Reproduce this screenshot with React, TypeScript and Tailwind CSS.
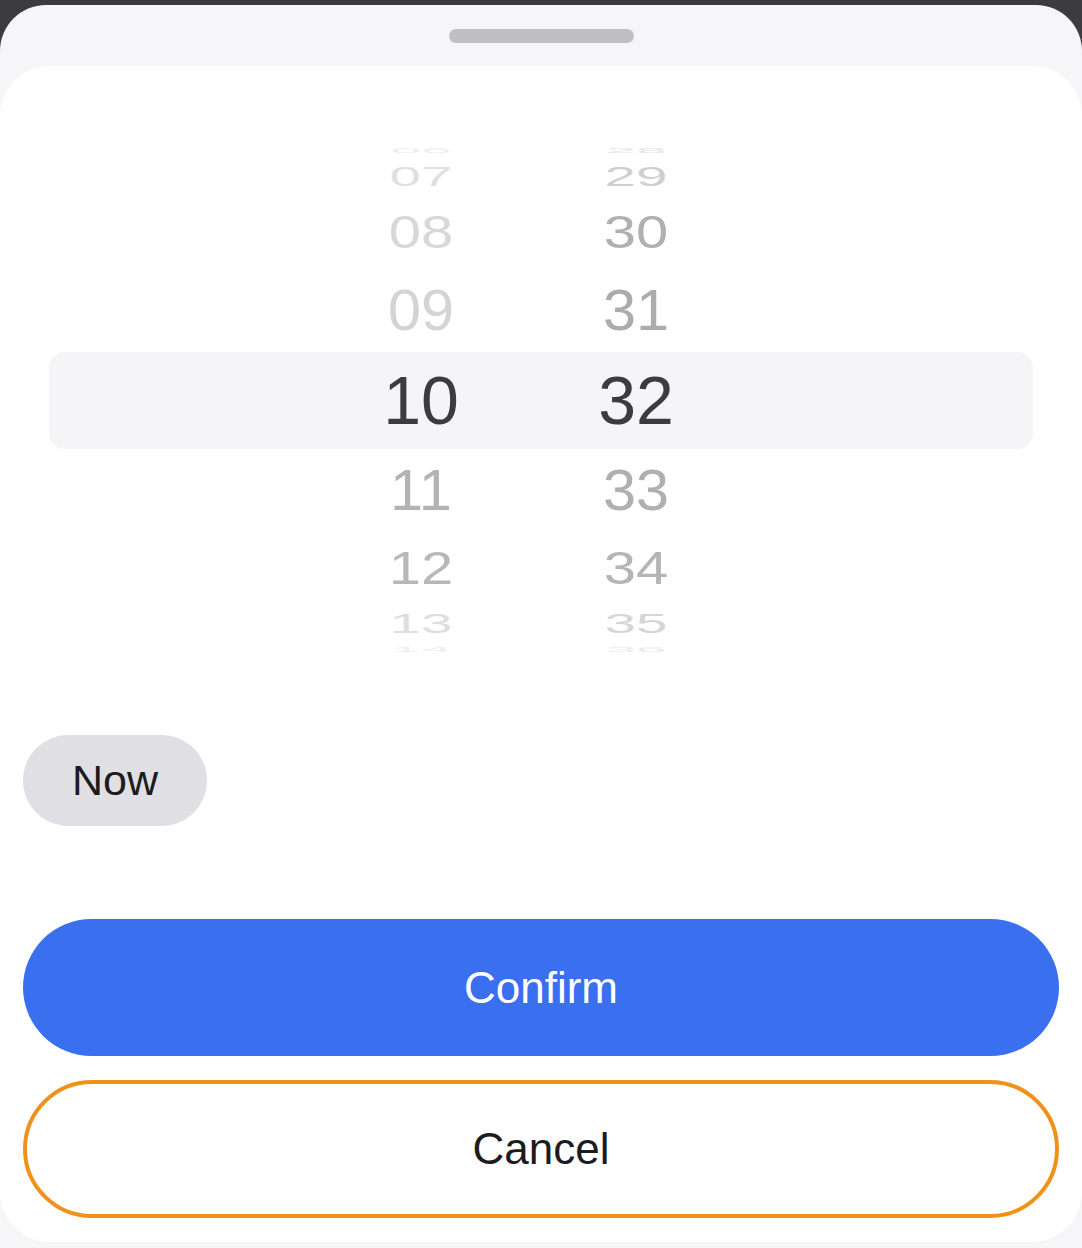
import React from 'react'

const R = 251
const STEP = 21

type Item = { label: string; color: string }

const hours: Item[] = [
  { label: '06', color: '#ededef' },
  { label: '07', color: '#e0e0e2' },
  { label: '08', color: '#d8d8da' },
  { label: '09', color: '#d4d4d6' },
  { label: '10', color: '#3c3c40' },
  { label: '11', color: '#b3b3b5' },
  { label: '12', color: '#b8b8ba' },
  { label: '13', color: '#dedee0' },
  { label: '14', color: '#eeeeef' },
]

const minutes: Item[] = [
  { label: '28', color: '#e6e6e8' },
  { label: '29', color: '#cfcfd1' },
  { label: '30', color: '#b0b0b2' },
  { label: '31', color: '#acacae' },
  { label: '32', color: '#3c3c40' },
  { label: '33', color: '#b0b0b2' },
  { label: '34', color: '#b5b5b7' },
  { label: '35', color: '#d6d6d8' },
  { label: '36', color: '#ebebed' },
]

// one wheel column, items projected on a cylinder
const Wheel: React.FC<{ items: Item[] }> = ({ items }) => {
  const mid = Math.floor(items.length / 2)
  return (
    <div className="relative w-[120px] h-[510px] overflow-hidden">
      {items.map((item, i) => {
        const k = i - mid
        const rad = (k * STEP * Math.PI) / 180
        const y = R * Math.sin(rad)
        const sy = Math.cos(rad)
        const sx = k === 0 ? 1 : 1 - Math.abs(k) * 0.025
        const fs = k === 0 ? 68 : 61
        return (
          <div
            key={item.label}
            className="absolute left-[-40px] right-[-40px] top-1/2 text-center whitespace-nowrap"
            style={{
              fontSize: `${fs}px`,
              lineHeight: `${fs}px`,
              height: `${fs}px`,
              marginTop: `${-fs / 2}px`,
              color: item.color,
              transform: `translateY(${y}px) scale(${sx}, ${sy})`,
            }}
          >
            {item.label}
          </div>
        )
      })}
    </div>
  )
}

export default function App() {
  return (
    <div
      className="w-[1082px] h-[1248px] bg-[#3c3c3e] pt-[5px] overflow-hidden"
      style={{ fontFamily: '"Liberation Sans", Arial, sans-serif' }}
    >
      <div className="h-full bg-[#f6f6f9] rounded-t-[46px] flex flex-col">
        <div className="flex justify-center pt-[24px] pb-[23px]">
          <div className="w-[185px] h-[14px] rounded-full bg-[#c0c0c2]" />
        </div>

        <div className="bg-white rounded-[50px] flex flex-col pt-[79px] pb-[24px] px-[23px]">
          {/* picker */}
          <div className="relative -mx-[23px]">
            <div className="absolute left-[49px] right-[49px] top-[207px] h-[97px] rounded-[16px] bg-[#f5f5f8]" />
            <div className="relative flex pl-[361px] gap-[95px]">
              <Wheel items={hours} />
              <Wheel items={minutes} />
            </div>
          </div>

          <div className="mt-[80px] flex">
            <button className="w-[184px] h-[91px] rounded-full bg-[#e0dfe3] text-[43px] text-[#1c1c1e]">
              Now
            </button>
          </div>

          <button className="mt-[93px] h-[137px] rounded-full bg-[#3a6ff0] text-white text-[44px]">
            Confirm
          </button>

          <button className="mt-[24px] h-[138px] rounded-full border-4 border-[#f0921a] bg-white text-[#1c1c1e] text-[44px]">
            Cancel
          </button>
        </div>
      </div>
    </div>
  )
}
